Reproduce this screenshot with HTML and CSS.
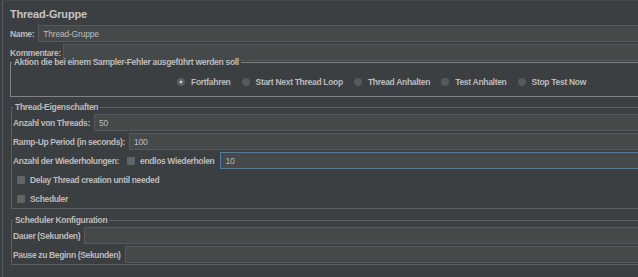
FILE: index.html
```html
<!DOCTYPE html>
<html lang="de">
<head>
    <meta charset="UTF-8">
    <title>Thread-Gruppe</title>
    <link rel="stylesheet" href="styles.css">
</head>
<body>
    <div class="panel">
        <div class="title">Thread-Gruppe</div>

        <div class="row">
            <label class="lbl" for="name">Name:</label>
            <input class="field" type="text" id="name" value="Thread-Gruppe">
        </div>
        <div class="row row-tight">
            <label class="lbl" for="kommentar">Kommentare:</label>
            <input class="field" type="text" id="kommentar">
        </div>

        <fieldset class="group group-action">
            <legend>Aktion die bei einem Sampler-Fehler ausgeführt werden soll</legend>
            <div class="radios">
                <span class="opt"><span class="radio checked"></span>Fortfahren</span>
                <span class="opt"><span class="radio"></span>Start Next Thread Loop</span>
                <span class="opt"><span class="radio"></span>Thread Anhalten</span>
                <span class="opt"><span class="radio"></span>Test Anhalten</span>
                <span class="opt"><span class="radio"></span>Stop Test Now</span>
            </div>
        </fieldset>

        <fieldset class="group group-threads">
            <legend>Thread-Eigenschaften</legend>
            <div class="row">
                <label class="lbl" for="threads">Anzahl von Threads:</label>
                <input class="field" type="text" id="threads" value="50">
            </div>
            <div class="row">
                <label class="lbl" for="rampup">Ramp-Up Period (in seconds):</label>
                <input class="field" type="text" id="rampup" value="100">
            </div>
            <div class="row">
                <label class="lbl" for="loops">Anzahl der Wiederholungen:</label>
                <span class="check"><span class="box"></span>endlos Wiederholen</span>
                <input class="field focus" type="text" id="loops" value="10">
            </div>
            <div class="row check-row"><span class="box"></span>Delay Thread creation until needed</div>
            <div class="row check-row"><span class="box"></span>Scheduler</div>
        </fieldset>

        <fieldset class="group group-scheduler">
            <legend>Scheduler Konfiguration</legend>
            <div class="row">
                <label class="lbl" for="dauer">Dauer (Sekunden)</label>
                <input class="field" type="text" id="dauer">
            </div>
            <div class="row">
                <label class="lbl" for="pause">Pause zu Beginn (Sekunden)</label>
                <input class="field" type="text" id="pause">
            </div>
        </fieldset>
    </div>
</body>
</html>
```
FILE: styles.css
```css
* {
    box-sizing: border-box;
}
html, body {
    margin: 0;
    height: 100%;
}
body {
    background-color: #3c3f41;
    color: #bbbbbb;
    font-family: "Liberation Sans", Arial, sans-serif;
    overflow: hidden;
}
.panel {
    height: 100%;
    margin-left: 2px;
    border-left: 1px solid #55585a;
    border-top: 1px solid #45484a;
    padding-left: 7px;
}
.title {
    height: 24px;
    padding-top: 3px;
    line-height: 20px;
    font-size: 11px;
    font-weight: bold;
    letter-spacing: -0.2px;
    color: #c4c4c4;
}
.row {
    display: flex;
    align-items: center;
    gap: 4px;
    height: 17px;
    margin-bottom: 2px;
    font-size: 8.5px;
    font-weight: bold;
    letter-spacing: -0.35px;
    white-space: nowrap;
}
.row-tight {
    gap: 2px;
}
.lbl {
    flex: none;
}
.field {
    flex: 1;
    min-width: 0;
    height: 17px;
    margin: 0;
    padding: 0 4px;
    background-color: #45494a;
    border: 1px solid #56595b;
    border-right: none;
    color: #bbbbbb;
    font-family: "Liberation Sans", Arial, sans-serif;
    font-size: 8.5px;
    font-weight: normal;
    letter-spacing: -0.2px;
    outline: none;
}
.field.focus {
    border-color: #4a7eb3;
}
.group {
    min-width: 0;
    margin: 0;
    border: 1px solid #5c5f61;
    border-right: none;
}
.group legend {
    padding: 0 2px;
    line-height: 12px;
    font-size: 8.5px;
    font-weight: bold;
    letter-spacing: -0.3px;
    white-space: nowrap;
}
.group-action {
    margin-top: -7px;
    padding: 7px 0 7px 1px;
    border-color: #808284;
    border-right: none;
}
.group-threads {
    margin-top: 4px;
    margin-left: 1px;
    padding: 1px 0 1px 1px;
}
.group-scheduler {
    margin-top: 5px;
    margin-left: 1px;
    padding: 1px 0 1px 1px;
}
.group .row:last-child {
    margin-bottom: 0;
}
.radios {
    display: flex;
    align-items: center;
    gap: 11px;
    height: 14px;
    padding-left: 165px;
    font-size: 8.5px;
    font-weight: bold;
    letter-spacing: -0.3px;
    white-space: nowrap;
}
.opt {
    display: flex;
    align-items: center;
    gap: 6px;
}
.radio {
    width: 8px;
    height: 8px;
    border-radius: 50%;
    background-color: #56595b;
}
.radio.checked {
    background: radial-gradient(circle, #d6d6d6 0 1.1px, #5c5f61 1.7px);
}
.box {
    flex: none;
    width: 8px;
    height: 8px;
    border-radius: 1px;
    background-color: #626567;
}
.check {
    display: flex;
    align-items: center;
    gap: 5px;
    margin: 0 2px 0 4px;
}
.check-row {
    gap: 5px;
    padding-left: 4px;
}
```
